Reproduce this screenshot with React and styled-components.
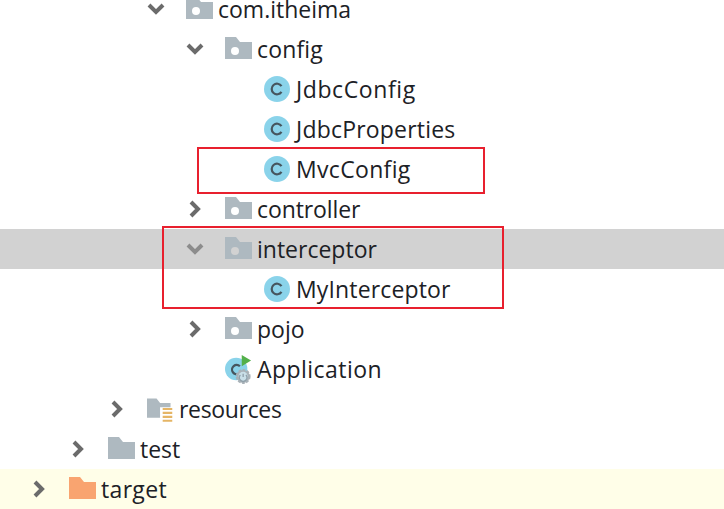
import React from "react";
import styled, { createGlobalStyle } from "styled-components";

const GlobalStyle = createGlobalStyle`
  html, body {
    margin: 0;
    background: #fff;
  }
  body {
    font-family: "Open Sans", "Noto Sans", "Liberation Sans", sans-serif;
  }
`

const Page = styled.div`
  position: relative;
  width: 724px;
  height: 509px;
  overflow: hidden;
  background: #fff;
`
const Tree = styled.ul`
  list-style: none;
  margin: -11px 0 0;
  padding: 0;
`
const Row = styled.li`
  display: flex;
  align-items: center;
  height: 40px;
  padding-left: ${(p) => 24 + p.$depth * 39}px;
  background: ${(p) => p.$bg || "transparent"};
`
const Toggle = styled.span`
  display: flex;
  align-items: center;
  flex: none;
  width: 45px;
  color: ${(p) => (p.$dim ? "#8c8c8c" : "#6b6b6b")};
`
const IconBox = styled.span`
  display: flex;
  align-items: center;
  flex: none;
  width: 27px;
  height: 32px;
`
const Label = styled.span`
  margin-left: 5px;
  font-size: 23px;
  line-height: 40px;
  letter-spacing: ${(p) => p.$track || 0}px;
  color: #1c2126;
  white-space: nowrap;
`
const RedBox = styled.div`
  position: absolute;
  box-sizing: border-box;
  left: ${(p) => p.$x}px;
  top: ${(p) => p.$y}px;
  width: ${(p) => p.$w}px;
  height: ${(p) => p.$h}px;
  border: 2px solid #e8202e;
  pointer-events: none;
`

function Chevron({ open }) {
  return (
    <svg width="30" height="20" viewBox="0 0 30 20" fill="none">
      <path
        d={open ? "M8 6l7 7 7-7" : "M11 3l7 7-7 7"}
        stroke="currentColor"
        strokeWidth="4"
      />
    </svg>
  );
}

function Folder({ color = "#aeb9c0", hole }) {
  return (
    <svg width="27" height="26" viewBox="0 0 27 26">
      <path d="M0 1H11L15 6H27V23H0Z" fill={color} />
      {hole && <circle cx="10" cy="15" r="4" fill={hole} />}
    </svg>
  );
}

function ResourceFolder() {
  return (
    <svg width="31" height="32" viewBox="0 0 31 32">
      <path d="M0 4H11L15 9H27V26H0Z" fill="#aeb9c0" />
      <rect x="15" y="14" width="16" height="16" fill="#fff" />
      <path d="M18 16H29M18 20.500H29M18 25H29M18 29.500H29" stroke="#e5b565" strokeWidth="2.500" />
    </svg>
  );
}

function ClassIcon() {
  return (
    <svg width="26" height="26" viewBox="0 0 26 26">
      <circle cx="13" cy="13" r="13" fill="#8ad3ea" />
      <path d="M17.500 10.200A5.300 5.300 0 1 0 17.500 15.800" fill="none" stroke="#46565f" strokeWidth="2.200" />
    </svg>
  );
}

function RunIcon() {
  return (
    <svg width="29" height="32" viewBox="0 0 29 32">
      <circle cx="12" cy="16" r="12" fill="#8ad3ea" />
      <path d="M16 13A5 5 0 1 0 15 21" fill="none" stroke="#46565f" strokeWidth="2.400" />
      <path d="M18 1L28 7L18 13Z" fill="#53b04a" />
      <circle cx="19.500" cy="24" r="7" fill="#a9b2b8" stroke="#a9b2b8" strokeWidth="2" strokeDasharray="3 1.500" />
      <circle cx="19.500" cy="24" r="5" fill="#c9dfe8" />
      <path d="M19.500 21v3.500M16.500 22.500a4 4 0 1 0 6 0" fill="none" stroke="#8fa0aa" strokeWidth="1.400" />
    </svg>
  );
}

const rows = [
  { id: "pkg", depth: 3, open: true, icon: <Folder hole="#fff" />, label: "com.itheima" },
  { id: "config", depth: 4, open: true, icon: <Folder hole="#fff" />, label: "config", track: 0.15 },
  { id: "jdbc", depth: 5, icon: <ClassIcon />, label: "JdbcConfig", track: 0.6 },
  { id: "props", depth: 5, icon: <ClassIcon />, label: "JdbcProperties", track: 0.2 },
  { id: "mvc", depth: 5, icon: <ClassIcon />, label: "MvcConfig", track: 0.33 },
  { id: "ctrl", depth: 4, open: false, icon: <Folder hole="#fff" />, label: "controller", track: -0.1 },
  { id: "inter", depth: 4, open: true, bg: "#d2d2d2", dim: true, icon: <Folder hole="#d2d2d2" />, label: "interceptor" },
  { id: "my", depth: 5, icon: <ClassIcon />, label: "MyInterceptor", track: 0.15 },
  { id: "pojo", depth: 4, open: false, icon: <Folder hole="#fff" />, label: "pojo" },
  { id: "app", depth: 4, icon: <RunIcon />, label: "Application", track: 0.45 },
  { id: "res", depth: 2, open: false, icon: <ResourceFolder />, label: "resources", track: -0.33 },
  { id: "test", depth: 1, open: false, icon: <Folder />, label: "test" },
  { id: "target", depth: 0, open: false, bg: "#fffee8", icon: <Folder color="#f9a470" />, label: "target", track: 0.33 },
];

function App() {
  return (
    <Page>
      <GlobalStyle />
      <Tree>
        {rows.map((r) => (
          <Row key={r.id} $depth={r.depth} $bg={r.bg}>
            <Toggle $dim={r.dim}>
              {r.open !== undefined && <Chevron open={r.open} />}
            </Toggle>
            <IconBox>{r.icon}</IconBox>
            <Label $track={r.track}>{r.label}</Label>
          </Row>
        ))}
      </Tree>
      <RedBox $x={197} $y={147} $w={288} $h={47} />
      <RedBox $x={162} $y={226} $w={342} $h={83} />
    </Page>
  );
}

export default App;
